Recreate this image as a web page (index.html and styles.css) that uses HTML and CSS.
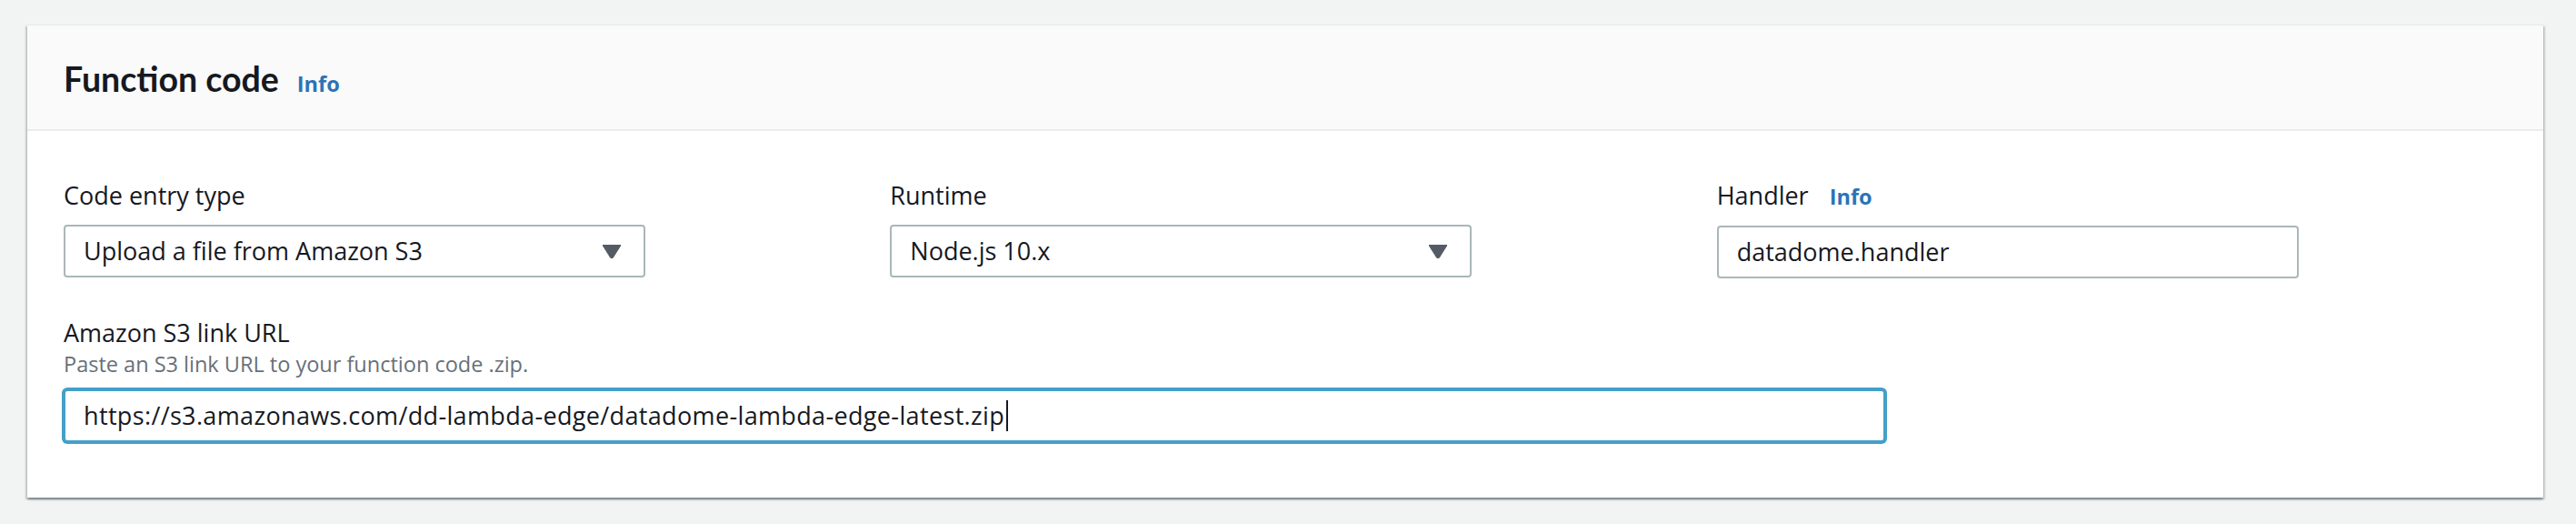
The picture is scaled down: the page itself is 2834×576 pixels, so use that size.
FILE: index.html
```html
<!DOCTYPE html>
<html lang="en">
<head>
<meta charset="utf-8">
<title>Function code</title>
<link rel="stylesheet" href="styles.css">
</head>
<body>
  <section class="card">
    <header class="card-header">
      <div class="title-row">
        <h2 class="card-title">Function code</h2>
        <a class="info-link info-link--title">Info</a>
      </div>
    </header>
    <div class="card-body">
      <div class="form-grid">
        <div class="field">
          <div class="field-label">Code entry type</div>
          <div class="select-box">
            <span class="control-text">Upload a file from Amazon S3</span>
            <svg class="select-arrow" width="20" height="15" viewBox="0 0 20 15"><polygon points="0,0.5 20,0.5 11.2,14.5 8.8,14.5" fill="#545b64" stroke="#545b64" stroke-width="1" stroke-linejoin="round"/></svg>
          </div>
        </div>
        <div class="field">
          <div class="field-label">Runtime</div>
          <div class="select-box">
            <span class="control-text">Node.js 10.x</span>
            <svg class="select-arrow" width="20" height="15" viewBox="0 0 20 15"><polygon points="0,0.5 20,0.5 11.2,14.5 8.8,14.5" fill="#545b64" stroke="#545b64" stroke-width="1" stroke-linejoin="round"/></svg>
          </div>
        </div>
        <div class="field">
          <div class="field-label">Handler <a class="info-link">Info</a></div>
          <div class="text-box">
            <span class="control-text">datadome.handler</span>
          </div>
        </div>
      </div>
      <div class="field field--url">
        <div class="field-label">Amazon S3 link URL</div>
        <div class="field-desc">Paste an S3 link URL to your function code .zip.</div>
        <div class="text-box text-box--focused">
          <span class="control-text control-text--url">https://s3.amazonaws.com/dd-lambda-edge/datadome-lambda-edge-latest.zip</span><span class="caret"></span>
        </div>
      </div>
    </div>
  </section>
</body>
</html>
```

FILE: styles.css
```css
html, body {
  margin: 0;
}

body {
  background: #f2f3f3;
  padding: 27px 36px 30px 30px;
  font-family: "Open Sans", "Liberation Sans", Arial, sans-serif;
  color: #16191f;
}

.card {
  background: #ffffff;
  border-top: 1px solid #e6e8e8;
  box-shadow: 0 2px 2px 0 rgba(0, 28, 36, 0.35), 2px 2px 2px 0 rgba(0, 28, 36, 0.15), -2px 2px 2px 0 rgba(0, 28, 36, 0.15);
}

.card-header {
  background: #fafafa;
  border-bottom: 2px solid #eaeded;
  min-height: 114px;
  padding: 0 40px;
  display: flex;
  align-items: center;
}

.title-row {
  display: flex;
  align-items: baseline;
  gap: 20px;
  padding-top: 3px;
}

.card-title {
  margin: 0;
  font-family: Lato, "Open Sans", sans-serif;
  font-weight: 700;
  font-size: 37.5px;
  line-height: 44px;
  color: #16191f;
}

.info-link {
  font-family: "Open Sans", "Liberation Sans", sans-serif;
  font-weight: 700;
  font-size: 23.5px;
  color: #2a73b8;
  text-decoration: none;
}

.card-body {
  padding: 53px 40px 61px 40px;
}

.form-grid {
  display: grid;
  grid-template-columns: repeat(3, 1fr);
  column-gap: 40px;
}

.field-label {
  font-size: 27px;
  line-height: 36px;
  margin-bottom: 14px;
  display: flex;
  align-items: baseline;
  gap: 23px;
}

.field--url {
  margin-top: 42px;
}

.field--url .field-label {
  margin-bottom: 0;
}

.field-desc {
  font-size: 23.5px;
  line-height: 32px;
  color: #687078;
  margin-bottom: 12px;
}

.select-box,
.text-box {
  box-sizing: border-box;
  width: 640px;
  height: 58px;
  border: 2px solid #aab7b8;
  border-radius: 4px;
  background: #ffffff;
  padding: 0 25px 0 20px;
  display: flex;
  align-items: center;
}

.select-box {
  justify-content: space-between;
}

.control-text {
  font-size: 27px;
  line-height: 36px;
  white-space: nowrap;
}

.control-text--url {
  letter-spacing: 0.35px;
}

.select-arrow {
  display: block;
  flex: none;
}

.text-box--focused {
  width: 2004px;
  border-color: #44a0c8;
  box-shadow: 0 0 0 2px #44a0c8;
}

.caret {
  display: inline-block;
  width: 2px;
  height: 34px;
  margin-left: 2px;
  background: #16191f;
}
```
